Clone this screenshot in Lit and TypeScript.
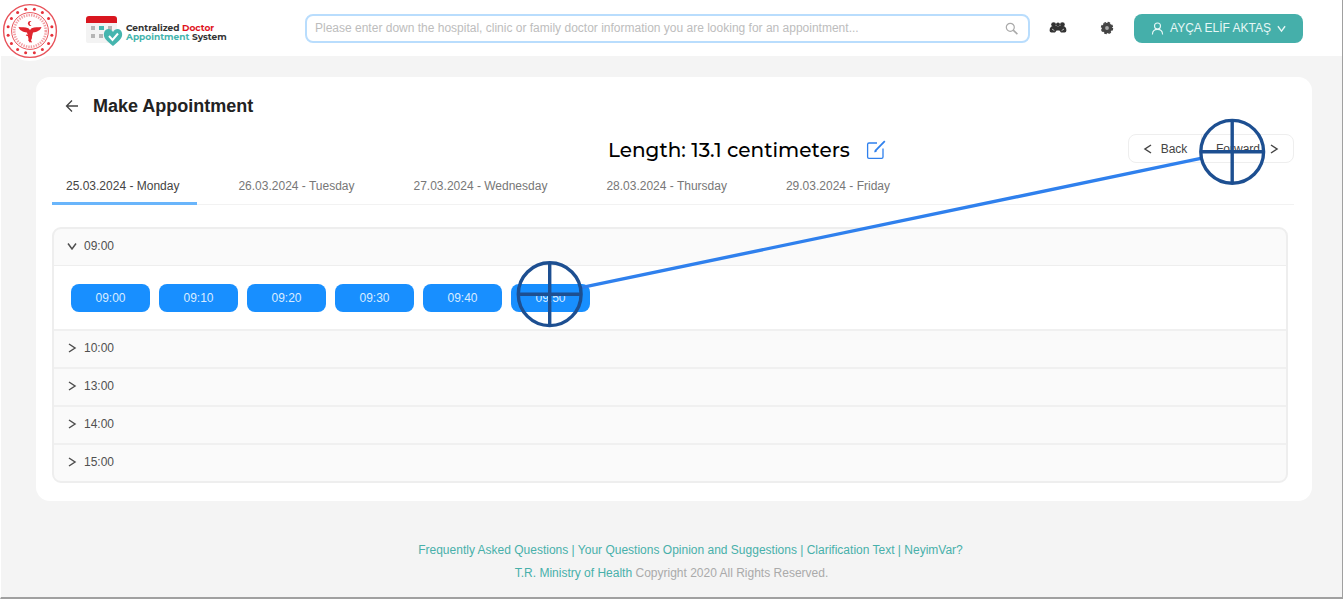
import { LitElement, html, css, svg } from "lit";
import { customElement, state } from "lit/decorators.js";
import { classMap } from "lit/directives/class-map.js";

const chevron = (d: string, size = 10) => html`
  <svg class="chev" width=${size} height=${size} viewBox="0 0 10 10" aria-hidden="true">
    <path d=${d} fill="none" stroke="currentColor" stroke-width="1.5" />
  </svg>`;
const RIGHT = "M2 1 L8 5 L2 9";
const LEFT = "M8 1 L2 5 L8 9";
const DOWN = "M1 2.5 L5 8 L9 2.5";

@customElement("ministry-seal")
class MinistrySeal extends LitElement {
  static styles = css`
    :host { display: block; }
    svg { display: block; }
  `;
  render() {
    const dots = Array.from({ length: 16 }, (_, i) => {
      const a = (i * Math.PI) / 8 + Math.PI / 16;
      return svg`<circle cx=${29 + Math.cos(a) * 22.3} cy=${31 + Math.sin(a) * 22.3} r="1.5" fill="#e5323b" />`;
    });
    return html`
      <svg width="60" height="62" viewBox="0 0 60 62" role="img" aria-label="Ministry of Health">
        <circle cx="29" cy="31" r="30" fill="#fff" />
        <g fill="none" stroke="#e8525a">
          <circle cx="29" cy="31" r="26.4" stroke-width="1.4" />
          <circle cx="29" cy="31" r="18.4" stroke-width="1" />
          <circle cx="29" cy="31" r="15.8" stroke-width="2.6" stroke-dasharray="1.4 1.1" opacity=".55" />
        </g>
        ${dots}
        <g fill="#e0262f" transform="translate(-1 1)">
          <path d="M18.5 26 C22 26.5 25 26 28.4 27.2 L30 29 L31.6 27.2 C35 26 38 26.5 41.5 26 C40.5 29.5 37 31 33 31.4 L32.5 33.5 L31 40 L30 42 L29 40 L27.5 33.5 L27 31.4 C23 31 19.5 29.5 18.5 26 Z" />
          <path d="M26 34 Q34 36 30 38 Q27 40 32 41" fill="none" stroke="#e0262f" stroke-width="1.1" />
          <path d="M31.6 20.4 A2.4 2.4 0 1 0 31.6 24.4 A1.9 1.9 0 1 1 31.6 20.4 Z" />
        </g>
      </svg>`;
  }
}

@customElement("measure-overlay")
class MeasureOverlay extends LitElement {
  static styles = css`
    :host { position: absolute; inset: 0 0 0 -1px; pointer-events: none; }
    .lines { position: absolute; left: 0; top: 0; overflow: visible; }
    .label {
      position: absolute; left: 608px; top: 138px;
      display: flex; align-items: center; gap: 16px;
      font: 500 20px/24px Montserrat, Inter, sans-serif; color: #000; white-space: nowrap;
    }
    .edit { display: block; border: 0; padding: 0; background: none; pointer-events: auto; }
    .edit svg { display: block; }
  `;
  private target(x: number, y: number) {
    return svg`<g fill="none" stroke="#1d4f91" stroke-width="3.4">
      <circle cx=${x} cy=${y} r="31.4" />
      <path d="M${x - 31} ${y} H${x + 31} M${x} ${y - 31} V${y + 31}" />
    </g>`;
  }
  render() {
    return html`
      <svg class="lines" width="1" height="1" aria-hidden="true">
        <path d="M581 287.6 L1202 158.2" stroke="#2f80ed" stroke-width="3.4" />
        ${this.target(549.7, 294.2)} ${this.target(1232.2, 151.8)}
      </svg>
      <div class="label">
        <span>Length: 13.1 centimeters</span>
        <button class="edit" aria-label="Edit length">
          <svg width="20" height="20" viewBox="0 0 20 20" fill="none" stroke="#2f80ed" stroke-width="1.3">
            <path d="M11 3 H3 Q1.6 3 1.6 4.4 V17 Q1.6 18.4 3 18.4 H15.6 Q17 18.4 17 17 V8.5" />
            <path d="M9 11.2 L18.8 1.2" stroke-width="1.8" />
            <path d="M8.4 11.8 L10.6 11" />
          </svg>
        </button>
      </div>`;
  }
}

@customElement("app-root")
class AppRoot extends LitElement {
  @state() private day = 0;
  @state() private open = "09:00";

  private days = ["25.03.2024 - Monday", "26.03.2024 - Tuesday", "27.03.2024 - Wednesday", "28.03.2024 - Thursday", "29.03.2024 - Friday"];
  private hours = ["09:00", "10:00", "13:00", "14:00", "15:00"];

  static styles = css`
    :host {
      display: flex; flex-direction: column; position: relative; box-sizing: border-box;
      min-height: 599px; background: #f4f4f4; overflow: hidden;
      border-left: 1px solid #fff; border-right: 1px solid #a0a0a0; border-bottom: 2px solid #a0a0a0;
      margin-right: 1px;
      font: 12px/16px "Liberation Sans", Arial, sans-serif; color: #555;
    }
    * { box-sizing: border-box; }
    button, input { font: inherit; color: inherit; margin: 0; }
    button { border: 0; background: none; padding: 0; cursor: pointer; }
    a { color: #48b0aa; text-decoration: none; }
    svg { flex: none; }

    .top { display: flex; align-items: center; height: 56px; background: #fff; padding-right: 39px; }
    .seal { align-self: flex-start; flex: none; height: 56px; }
    .brand { display: flex; align-items: center; gap: 3px; margin-left: 24px; width: 220px; flex: none; color: #333; padding-top: 6px; }
    .name { font: 700 9px/9px Montserrat, Inter, sans-serif; white-space: nowrap; padding-top: 2px; }
    .line { display: block; }
    .red { color: #e0141e; }
    .teal { color: #45b5ae; }
    .search {
      display: flex; align-items: center; flex: 1; min-width: 0; height: 29px; padding: 0 10px 0 8px;
      border: 2px solid #b9ddfd; border-radius: 8px; background: #fff; color: #aaa;
    }
    .box { flex: 1; min-width: 0; border: 0; outline: 0; padding: 0; background: none; color: #555; }
    .box::placeholder { color: #bdbdbd; opacity: 1; }
    .icon { display: grid; place-items: center; width: 38px; height: 29px; flex: none; }
    .tools { display: flex; gap: 11px; padding: 0 8px 0 9px; }
    .user {
      display: flex; align-items: center; justify-content: center; gap: 6px; flex: none;
      width: 169px; height: 29px; border-radius: 8px; background: #45afaa; color: #e6f7f6; white-space: nowrap;
    }

    .card { margin: 21px 30px 0 35px; padding: 18px 18px 18px 16px; border-radius: 14px; background: #fff; }
    .head { display: flex; align-items: center; gap: 14px; padding-left: 13px; height: 22px; }
    .back { padding-top: 3px; }
    .title { margin: 0; font-size: 18px; line-height: 22px; font-weight: 700; color: #222; }
    .nav { display: flex; justify-content: flex-end; margin-top: 17px; }
    .pair { display: flex; height: 29px; border: 1px solid #eee; border-radius: 8px; color: #444; }
    .step { display: flex; align-items: center; justify-content: center; gap: 8px; width: 72px; }
    .next { width: 92px; gap: 9px; border-left: 1px solid #eee; }

    .tabs { display: flex; gap: 27px; height: 42px; border-bottom: 1px solid #f2f2f2; }
    .tab { padding: 6px 18px 0 14px; height: 42px; color: #777; white-space: nowrap; border-bottom: 3px solid transparent; }
    .active { color: #444; border-bottom-color: #69b5fb; }

    .list { margin: 22px 6px 0 0; border: 2px solid #eee; border-radius: 9px; background: #fafafa; overflow: hidden; }
    .hour { display: flex; align-items: center; gap: 7px; width: 100%; height: 36px; padding: 0 0 2px 13px; color: #505050; }
    .group + .group { border-top: 2px solid #f0f0f0; }
    .slots { display: flex; flex-wrap: wrap; gap: 9px; padding: 18px 17px 17px; background: #fff; border-top: 1px solid #eee; }
    .slot { width: 79px; height: 28px; padding-bottom: 1px; border-radius: 8px; background: #188fff; color: #d9ecff; }

    .foot { display: flex; flex-direction: column; align-items: center; gap: 7px; padding-top: 41px; color: #aaa; }
    .foot p { margin: 0; color: #aaa; }
    .links { color: #48b0aa; padding-left: 38px; }
  `;

  render() {
    return html`
      <header class="top">
        <ministry-seal class="seal"></ministry-seal>
        <div class="brand">
          <svg width="38" height="34" viewBox="0 0 38 34" aria-hidden="true">
            <rect x="1" y="3" width="31" height="26" rx="2" fill="#f3f3f3" />
            <path d="M1 9 V5 Q1 2 4 2 H29 Q32 2 32 5 V9 Z" fill="#d9161f" />
            <g fill="#b5b5b5">
              <rect x="6" y="12" width="4" height="4" /><rect x="23" y="12" width="4" height="4" />
              <rect x="6" y="20" width="4" height="4" /><rect x="14" y="20" width="4" height="4" />
            </g>
            <rect x="14" y="12" width="5" height="4" fill="#45b5ae" />
            <path d="M28 32 C22 27 18 24 19 19 C20 14 26 14 28 18 C30 14 36 14 37 19 C38 24 34 27 28 32 Z" fill="#45b5ae" />
            <path d="M24 22 L27.5 26 L33 19.5" fill="none" stroke="#fff" stroke-width="2" />
          </svg>
          <div class="name">
            <span class="line">Centralized <span class="red">Doctor</span></span>
            <span class="line"><span class="teal">Appointment</span> System</span>
          </div>
        </div>
        <label class="search">
          <input class="box" type="search" aria-label="Search"
            placeholder="Please enter down the hospital, clinic or family doctor information you are looking for an appointment..." />
          <svg width="13" height="13" viewBox="0 0 13 13" fill="none" stroke="currentColor" stroke-width="1.2" aria-hidden="true">
            <circle cx="5.3" cy="5.3" r="4" /><path d="M8.2 8.2 L12.4 12.2" stroke-width="1.6" />
          </svg>
        </label>
        <div class="tools">
          <button class="icon" aria-label="Family">
            <svg width="18" height="15" viewBox="0 0 18 15" fill="#333">
              <circle cx="4.6" cy="3.6" r="2.4" /><circle cx="9" cy="3.4" r="2" /><circle cx="13.4" cy="3.6" r="2.4" />
              <path d="M.6 9.5 Q.6 5 4.6 5 Q7 4.6 9 5.4 Q11 4.6 13.4 5 Q17.4 5 17.4 9.5 Q17.4 11.4 15.6 11.4 L12 11.4 L10.4 9.4 H7.6 L6 11.4 H2.4 Q.6 11.4 .6 9.5 Z" />
              <path d="M3 8 L5.4 9.6 M15 8 L12.6 9.6" stroke="#ddd" stroke-width=".8" />
            </svg>
          </button>
          <button class="icon" aria-label="Settings">
            <svg width="14" height="14" viewBox="0 0 14 14">
              <circle cx="7" cy="7" r="3.6" fill="#aaa" stroke="#444" stroke-width="3.4" />
              <circle cx="7" cy="7" r="5.5" fill="none" stroke="#444" stroke-width="1.4" stroke-dasharray="2.6 1.72" />
            </svg>
          </button>
        </div>
        <button class="user">
          <svg width="13" height="13" viewBox="0 0 13 13" fill="none" stroke="currentColor" stroke-width="1.1" aria-hidden="true">
            <circle cx="6.5" cy="4" r="3" /><path d="M1.4 12.4 Q1.6 7.4 6.5 7.4 Q11.4 7.4 11.6 12.4" />
          </svg>
          <span>AYÇA ELİF AKTAŞ</span>
          ${chevron(DOWN, 9)}
        </button>
      </header>

      <main class="card">
        <div class="head">
          <button class="back" aria-label="Go back">
            <svg width="14" height="14" viewBox="0 0 14 14" fill="none" stroke="#444" stroke-width="1.3">
              <path d="M13 7 H1.5 M7 1.5 L1.5 7 L7 12.5" />
            </svg>
          </button>
          <h1 class="title">Make Appointment</h1>
        </div>
        <div class="nav">
          <div class="pair">
            <button class="step">${chevron(LEFT)}<span>Back</span></button>
            <button class="step next"><span>Forward</span>${chevron(RIGHT)}</button>
          </div>
        </div>
        <div class="tabs" role="tablist">
          ${this.days.map((d, i) => html`
            <button role="tab" aria-selected=${i === this.day} class=${classMap({ tab: true, active: i === this.day })}
              @click=${() => (this.day = i)}>${d}</button>`)}
        </div>
        <div class="list">
          ${this.hours.map((h) => html`
            <section class="group">
              <button class="hour" aria-expanded=${h === this.open} @click=${() => (this.open = h === this.open ? "" : h)}>
                ${chevron(h === this.open ? DOWN : RIGHT)}<span>${h}</span>
              </button>
              ${h === this.open
                ? html`<div class="slots">${[0, 1, 2, 3, 4, 5].map((m) => html`<button class="slot">${h.slice(0, 3)}${m}0</button>`)}</div>`
                : ""}
            </section>`)}
        </div>
      </main>

      <footer class="foot">
        <div class="links">
          <a href="#faq">Frequently Asked Questions</a> | <a href="#opinion">Your Questions Opinion and Suggestions</a> | <a href="#text">Clarification Text</a> | <a href="#neyimvar">NeyimVar?</a>
        </div>
        <p><a href="#ministry">T.R. Ministry of Health</a> Copyright 2020 All Rights Reserved.</p>
      </footer>
      <measure-overlay></measure-overlay>`;
  }
}
